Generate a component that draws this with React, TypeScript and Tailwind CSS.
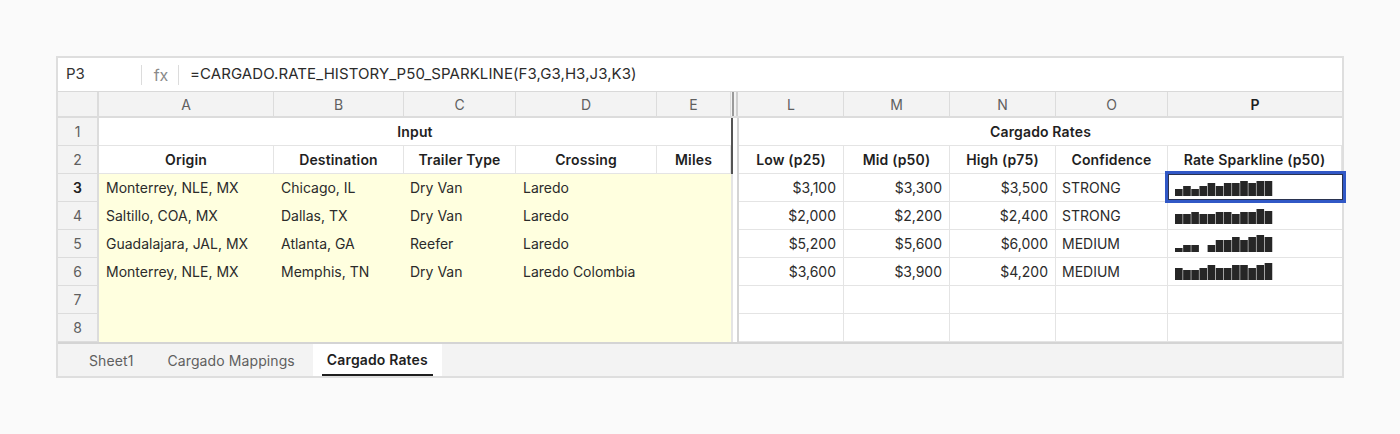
import React from "react";

const leftCols = ["A", "B", "C", "D", "E"];
const rightCols = ["L", "M", "N", "O", "P"];
const leftHeads = ["Origin", "Destination", "Trailer Type", "Crossing", "Miles"];
const rightHeads = ["Low (p25)", "Mid (p50)", "High (p75)", "Confidence", "Rate Sparkline (p50)"];

const rows = [
  { left: ["Monterrey, NLE, MX", "Chicago, IL", "Dry Van", "Laredo", ""], right: ["$3,100", "$3,300", "$3,500", "STRONG"], spark: [7, 10, 7, 10, 13, 10, 13, 13, 15, 13, 15, 15] },
  { left: ["Saltillo, COA, MX", "Dallas, TX", "Dry Van", "Laredo", ""], right: ["$2,000", "$2,200", "$2,400", "STRONG"], spark: [10, 10, 12, 10, 10, 12, 12, 10, 12, 12, 15, 13] },
  { left: ["Guadalajara, JAL, MX", "Atlanta, GA", "Reefer", "Laredo", ""], right: ["$5,200", "$5,600", "$6,000", "MEDIUM"], spark: [4, 7, 7, 0, 7, 12, 12, 15, 12, 15, 17, 15] },
  { left: ["Monterrey, NLE, MX", "Memphis, TN", "Dry Van", "Laredo Colombia", ""], right: ["$3,600", "$3,900", "$4,200", "MEDIUM"], spark: [12, 10, 10, 12, 15, 12, 12, 15, 15, 12, 15, 17] },
  { left: ["", "", "", "", ""], right: ["", "", "", ""], spark: [] },
  { left: ["", "", "", "", ""], right: ["", "", "", ""], spark: [] },
];

const Sparkline = ({ data }: { data: number[] }) => (
  <svg width="98" height="18" viewBox="0 0 98 18">
    {data.map((h, i) => (
      <rect key={i} x={i * 8.15} y={18 - h} width="7.6" height={h} fill="#262626" />
    ))}
  </svg>
);

const ColHead = ({ label, active }: { label: string; active?: boolean }) => (
  <div className={`flex items-center justify-center border-b-2 border-[#dcdcdc] bg-[#f3f3f3] text-[14px] ${active ? "font-semibold text-[#1f1f1f]" : "border-r text-[#5f5f5f]"}`}>
    {label}
  </div>
);

const RowHead = ({ n, active }: { n: number; active?: boolean }) => (
  <div className={`flex items-center justify-center border-b border-r-2 border-[#dcdcdc] bg-[#f3f3f3] text-[14px] ${active ? "font-semibold text-[#1f1f1f]" : "text-[#5f5f5f]"}`}>
    {n}
  </div>
);

const BoldCell = ({ label }: { label: string }) => (
  <div className="flex items-center justify-center whitespace-nowrap border-b border-r border-[#e4e4e4] bg-white text-[14px] font-semibold tracking-[0.15px] text-[#1f1f1f]">
    {label}
  </div>
);

export default function App() {
  return (
    <div className="h-[434px] w-[1400px] bg-[#fafafa] px-[56px] pt-[56px] font-['Inter',sans-serif] text-[14px] text-[#2b2b2b]">
      <div className="h-[322px] w-[1288px] border-2 border-[#dedede] bg-white">
        <div className="flex h-[34px] items-center border-b border-[#d9d9d9] bg-white">
          <div className="w-[83px] pl-2 text-[15px] text-[#333333]">P3</div>
          <div className="h-[20px] w-px bg-[#dcdcdc]" />
          <div className="w-[36px] pl-[2px] text-center text-[16px] text-[#8a8a8a]">fx</div>
          <div className="h-[20px] w-px bg-[#dcdcdc]" />
          <div className="pl-[11px] text-[15px] tracking-[0.08px] text-[#2b2b2b]">=CARGADO.RATE_HISTORY_P50_SPARKLINE(F3,G3,H3,J3,K3)</div>
        </div>

        <div className="grid grid-cols-[41px_175px_130px_112px_141px_74px_8px_105px_106px_106px_112px_174px] grid-rows-[26px_repeat(8,28px)]">
          <div className="border-b-2 border-r-2 border-[#dcdcdc] bg-[#f3f3f3]" />
          {leftCols.map((c) => (
            <ColHead key={c} label={c} />
          ))}
          <div className="flex justify-center gap-[2px] border-b-2 border-[#dcdcdc] bg-[#f3f3f3]">
            <div className="w-[2px] bg-[#9a9a9a]" />
            <div className="w-[2px] bg-[#cfcfcf]" />
          </div>
          {rightCols.map((c) => (
            <ColHead key={c} label={c} active={c === "P"} />
          ))}

          <RowHead n={1} />
          <div className="col-span-5 flex items-center justify-center border-b border-[#e4e4e4] text-[14px] font-semibold tracking-[0.15px] text-[#1f1f1f]">Input</div>
          <div className="row-span-2 border-l-2 border-r-2 border-l-[#555555] border-r-[#d4d4d4] bg-white" />
          <div className="col-span-5 flex items-center justify-center border-b border-[#e4e4e4] text-[14px] font-semibold tracking-[0.15px] text-[#1f1f1f]">Cargado Rates</div>

          <RowHead n={2} />
          {leftHeads.map((h) => (
            <BoldCell key={h} label={h} />
          ))}
          {rightHeads.map((h) => (
            <BoldCell key={h} label={h} />
          ))}

          {rows.map((r, i) => (
            <React.Fragment key={i}>
              <RowHead n={i + 3} active={i === 0} />
              <div className="col-span-5 grid grid-cols-[175px_130px_112px_141px_74px] bg-[#ffffdf]">
                {r.left.map((v, j) => (
                  <div key={j} className={`flex items-center whitespace-nowrap pb-px text-[14px] text-[#2b2b2b] ${j === 2 ? "pl-[6px]" : "pl-[7px]"}`}>
                    {v}
                  </div>
                ))}
              </div>
              <div className="border-l-2 border-r-2 border-l-[#e4e4e4] border-r-[#d4d4d4] bg-white" />
              {r.right.map((v, j) => (
                <div key={j} className={`flex items-center border-b border-r border-[#e4e4e4] text-[14px] ${j < 3 ? "justify-end pr-[7px]" : "pl-[6px]"}`}>
                  {v}
                </div>
              ))}
              <div className="relative flex items-end border-b border-[#e4e4e4] pb-[5px] pl-[7px]">
                {r.spark.length > 0 && <Sparkline data={r.spark} />}
                {i === 0 && <div className="absolute bottom-[-2px] left-[-3px] right-[-4px] top-[-3px] border-[3px] border-[#3158c6] shadow-[inset_0_0_0_1px_#2a3350]" />}
              </div>
            </React.Fragment>
          ))}
        </div>

        <div className="flex h-[34px] border-t-2 border-[#d4d4d4] bg-[#f3f3f3]">
          <div className="flex items-center pl-[31px] text-[14px] tracking-[0.1px] text-[#5f5f5f]">Sheet1</div>
          <div className="flex items-center pl-[34px] text-[14px] tracking-[0.1px] text-[#5f5f5f]">Cargado Mappings</div>
          <div className="ml-[18px] flex w-[129px] flex-col items-center bg-white">
            <div className="flex flex-1 items-center text-[14px] font-semibold tracking-[0.15px] text-[#1f1f1f]">Cargado Rates</div>
            <div className="h-[2px] w-[111px] bg-[#1f1f1f]" />
          </div>
        </div>
      </div>
    </div>
  );
}
